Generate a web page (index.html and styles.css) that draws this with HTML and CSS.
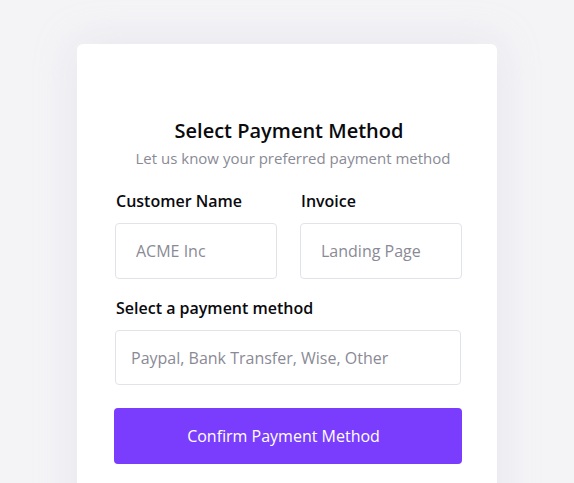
FILE: index.html
```html
<!DOCTYPE html>
<html lang="en">

<head>
    <meta charset="UTF-8">
    <meta name="viewport" content="width=device-width, initial-scale=1.0">
    <link rel="stylesheet" href="styles.css">
</head>

<body>
    <div class="card">
        <h1 class="title">Select Payment Method</h1>
        <p class="subtitle">Let us know your preferred payment method</p>

        <form class="pay-form">
            <div class="row">
                <div class="field">
                    <label for="customer">Customer Name</label>
                    <input type="text" id="customer" class="input" placeholder="ACME Inc">
                </div>
                <div class="field">
                    <label for="invoice">Invoice</label>
                    <input type="text" id="invoice" class="input" placeholder="Landing Page">
                </div>
            </div>

            <div class="field">
                <label for="method">Select a payment method</label>
                <input type="text" id="method" class="input input-wide" placeholder="Paypal, Bank Transfer, Wise, Other">
            </div>

            <button type="button" class="btn">Confirm Payment Method</button>
        </form>
    </div>
</body>

</html>
```

FILE: styles.css
```css
body {
    margin: 0;
    background-color: #f4f4f7;
    font-family: "Open Sans", "Noto Sans", sans-serif;
    height: 483px;
    overflow: hidden;
}

.card {
    width: 420px;
    box-sizing: border-box;
    margin: 44px 0 0 77px;
    padding: 74px 34px 40px 38px;
    background-color: #fff;
    border-radius: 6px;
    box-shadow: 0 0 40px rgba(200, 200, 215, 0.35);
    min-height: 500px;
}

.title {
    margin: 0;
    font-size: 20px;
    font-weight: 600;
    line-height: 26px;
    color: #0a0a0e;
    text-align: center;
}

.subtitle {
    margin: 4px 0 0;
    padding-left: 8px;
    font-size: 15px;
    line-height: 20px;
    color: #8a8a96;
    text-align: center;
}

.pay-form {
    margin-top: 22px;
}

.row {
    display: flex;
    gap: 23px;
}

.row .field {
    width: 162px;
}

.field {
    display: flex;
    flex-direction: column;
    margin-bottom: 18px;
}

.field label {
    font-size: 16px;
    font-weight: 600;
    line-height: 22px;
    color: #0a0a0e;
    margin: 0 0 11px 1px;
}

.input {
    box-sizing: border-box;
    height: 56px;
    padding: 0 20px;
    border: 1px solid #e2e2ea;
    border-radius: 4px;
    font-family: inherit;
    font-size: 16px;
    color: #333;
    outline: none;
}

.input::placeholder {
    color: #8a8a96;
}

.input-wide {
    width: 346px;
    height: 55px;
    padding: 0 15px;
}

.btn {
    display: block;
    width: 348px;
    height: 56px;
    margin: 23px 0 0 -1px;
    padding: 0 9px 0 0;
    border: none;
    border-radius: 4px;
    background-color: #7a3dfe;
    color: #fff;
    font-family: inherit;
    font-size: 16px;
    cursor: pointer;
}
```
